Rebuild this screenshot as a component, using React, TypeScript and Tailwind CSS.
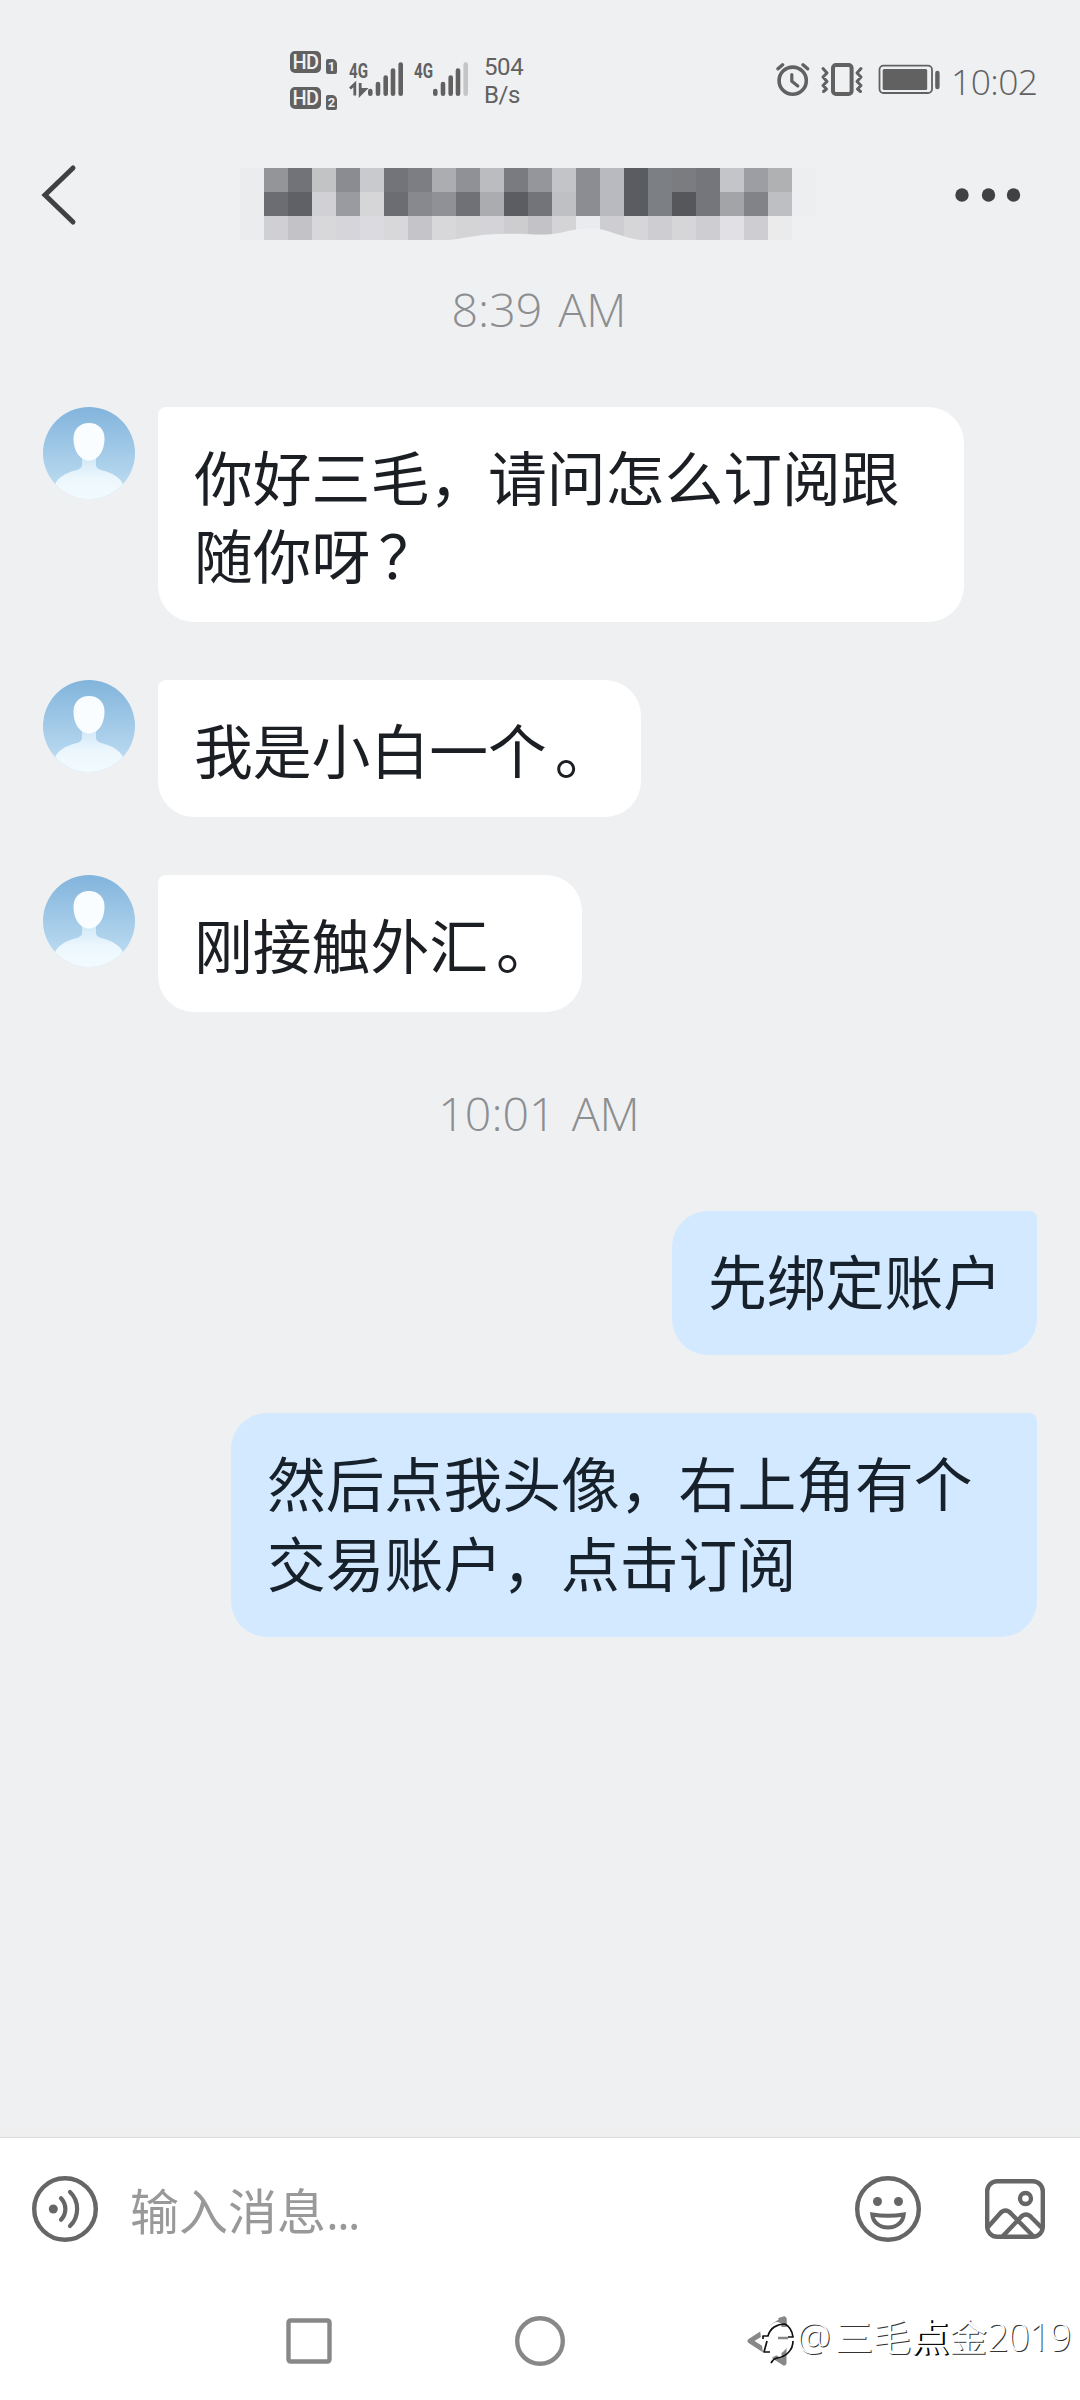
import type { ReactNode } from "react";

const mosaic = [
  ["#949599", "#727378", "#c2c3c5", "#8b8c91", "#c9cacd", "#727479", "#7c7e83", "#acadb0", "#8f9196", "#bbbcc0", "#7a7b80", "#94969b", "#c3c4c7", "#8b8d93", "#b9babf", "#5a5c61", "#7c7f84", "#7a7c80", "#74767b", "#c4c5c8", "#9c9ea4", "#b0b1b3"],
  ["#6b6d72", "#5f6166", "#d0d0d5", "#9a9ba1", "#d6d6d8", "#6b6d72", "#88898e", "#8f9196", "#6f7176", "#abacb0", "#5c5d62", "#727479", "#bfc0c3", "#8b8d93", "#b9babf", "#5a5c61", "#7c7f84", "#55575b", "#74767b", "#a3a4a8", "#818388", "#bebfc2"],
  ["#cfcfd4", "#c2c2c7", "#d8d8da", "#d6d6da", "#dadae0", "#d8d8da", "#c4c4c9", "#d8d8da", "#d4d4d6", "#d4d4d8", "#cdcdcf", "#c3c3c7", "#d4d4d6", "#eaebee", "#cdcdd2", "#d6d6d8", "#cdcdd2", "#d6d6d8", "#cdcdd2", "#e0e0e5", "#cdcdd2", "#ebebec"],
];

const HdBadge = ({ sim }: { sim: string }) => (
  <div className="flex h-[22px] items-end gap-[5px]">
    <span className="flex h-[22px] w-[31px] items-center justify-center rounded-[5px] bg-[#616161] font-['Roboto',sans-serif] text-[20px] leading-[22px] font-medium tracking-[-0.5px] text-[#eff0f2]">
      HD
    </span>
    <span className="mb-[-1px] flex h-[15px] w-[11px] items-center justify-center rounded-[2px] rounded-tr-[5px] bg-[#616161] font-['Roboto',sans-serif] text-[13px] leading-[15px] font-bold text-[#eff0f2]">
      {sim}
    </span>
  </div>
);

const Signal = ({ data, last }: { data?: boolean; last: string }) => (
  <svg width="56" height="44" viewBox="0 -6 56 44" fill="none">
    <text x="0" y="17.500" fill="#616161" fontFamily="Roboto" fontWeight="700" fontSize="20" textLength="19" lengthAdjust="spacingAndGlyphs">
      4G
    </text>
    {data && <path d="M1 28.500 5.800 24v11.500M11.200 23v12M11.200 34.500l5-5h-5z" stroke="#616161" strokeWidth="2.800" />}
    <g stroke="#616161" strokeWidth="4.600" strokeLinecap="round">
      <path d="M21.300 31v2.700M29 24v9.700M36.700 17.500v16.200M44 10.500v23.200" />
      <path d="M51.700 4.500v29.200" stroke={last} />
    </g>
  </svg>
);

const StatusBar = () => (
  <div className="flex h-32 items-start pr-[43px] pl-[290px] text-[#616161]">
    <div className="mt-[51px] flex flex-col gap-[14px]">
      <HdBadge sim="1" />
      <HdBadge sim="2" />
    </div>
    <div className="mt-[54px] ml-[12px] flex gap-[9px]">
      <Signal data last="#616161" />
      <Signal last="#c4c5c6" />
    </div>
    <div className="mt-[53px] ml-[14px] font-['Roboto',sans-serif] text-[24px] leading-[28px] tracking-[-0.4px]">
      <div>504</div>
      <div>B/s</div>
    </div>
    <svg className="mt-[60px] ml-auto" width="164" height="40" viewBox="776 60 164 40" fill="none" stroke="#616161" strokeLinecap="round" strokeLinejoin="round">
      {/* alarm */}
      <circle cx="792.700" cy="80.700" r="13.600" strokeWidth="3.600" />
      <path d="M791.800 74.500v6.800l6 4.800" strokeWidth="3.200" />
      <path d="m778 68.800 4.600-4M807.600 68.800l-4.600-4" strokeWidth="3.400" />
      {/* vibrate */}
      <rect x="833" y="65" width="18.600" height="29" rx="3" strokeWidth="4" />
      <path d="m823 68.500 4 4.500-4 4 4 4.500-4 4 3.500 3.500-3 2.500M861 68.500l-4 4.500 4 4-4 4.500 4 4-3.500 3.500 3 2.500" strokeWidth="3" />
      {/* battery */}
      <rect x="879.500" y="65.700" width="52.500" height="27.300" rx="4" strokeWidth="1.800" />
      <rect x="882.700" y="69" width="44.500" height="21" rx="1.500" fill="#616161" stroke="none" />
      <path d="M937.400 73v14" strokeWidth="4.400" />
    </svg>
    <span className="mt-[56px] ml-[11px] w-[86px] font-['Open_Sans',sans-serif] text-[35.500px] leading-[50px] font-light tracking-[-0.6px]">
      10:02
    </span>
  </div>
);

const Header = () => (
  <header className="flex h-[134px] items-center">
    <svg className="ml-[40px]" width="40" height="64" viewBox="0 0 40 64" fill="none">
      <path d="M33 5 5 32l28 27" stroke="#404142" strokeWidth="5" strokeLinecap="round" strokeLinejoin="miter" />
    </svg>
    <svg className="mt-[18px] ml-[160px]" width="576" height="76" viewBox="-24 -2 576 76" shapeRendering="crispEdges">
      <path d="M-24 0H0v72h-24z" fill="#ebecee" />
      {mosaic.map((row, y) =>
        row.map((color, x) => <rect key={`${x}-${y}`} x={x * 24} y={y * 24} width="24" height="24" fill={color} />)
      )}
      <path d="M528 0h24v48h-24z" fill="#edeef0" />
      <path d="M178 73C205 70 212 66 238 66c26-1 43 3 62-2 12-3 27-5 40-2 14 4 25 9 42 11z" fill="#eff0f2" shapeRendering="auto" />
    </svg>
    <svg className="ml-[139px]" width="68" height="20" viewBox="0 0 68 20" fill="#404142">
      <circle cx="7" cy="10" r="6.700" />
      <circle cx="33.500" cy="10" r="6.700" />
      <circle cx="58.500" cy="10" r="6.700" />
    </svg>
  </header>
);

const Avatar = () => (
  <svg className="shrink-0" width="92" height="92" viewBox="0 0 92 92">
    <defs>
      <linearGradient id="sky" x1="0" y1="0" x2="0" y2="1">
        <stop offset="0" stopColor="#82b4dc" />
        <stop offset="1" stopColor="#c4e1f4" />
      </linearGradient>
      <linearGradient id="body" x1="0" y1="0" x2="0" y2="1">
        <stop offset="0" stopColor="#cfe7f7" />
        <stop offset="0.500" stopColor="#ecf7fd" />
        <stop offset="1" stopColor="#f2fbff" />
      </linearGradient>
      <clipPath id="round">
        <circle cx="46" cy="46" r="46" />
      </clipPath>
    </defs>
    <g clipPath="url(#round)">
      <path d="M0 0h92v92H0z" fill="url(#sky)" />
      <path d="M39 50h14v8c0 3 3 4.500 7 5.500 9 2.500 17 6.500 20 14V92H12V77.500c3-7.500 11-11.500 20-14 4-1 7-2.500 7-5.500z" fill="url(#body)" />
      <path d="M46 16c9 0 15.500 6 15.500 15.500C61.500 44 55 53.500 46 53.500S30.500 44 30.500 31.500C30.500 22 37 16 46 16z" fill="#fafdff" />
    </g>
  </svg>
);

const Time = ({ children }: { children: ReactNode }) => (
  <div className="pr-[2px] text-center font-['Open_Sans',sans-serif] text-[46.500px] leading-[58px] font-light [word-spacing:4px] text-[#8c8e90]">
    {children}
  </div>
);

// closing mark, set a little looser than the font's own side bearing
const Mark = ({ children }: { children: ReactNode }) => <span className="ml-[8px]">{children}</span>;

const Received = ({ children }: { children: ReactNode }) => (
  <div className="flex items-start gap-[23px]">
    <Avatar />
    <p className="max-w-[806px] rounded-[36px] rounded-tl-[8px] bg-white pt-[30px] pr-[27px] pb-[29px] pl-[36px] leading-[78px]">
      {children}
    </p>
  </div>
);

const Sent = ({ children }: { children: ReactNode }) => (
  <p className="max-w-[806px] self-end rounded-[36px] rounded-tr-[8px] bg-[#d2e9ff] pt-[29px] pr-[35px] pb-[35px] pl-[36px] leading-[80px]">
    {children}
  </p>
);

const InputBar = () => (
  <div className="flex h-[143px] items-center border-t border-[#dcdcdc] pl-[32px]">
    <svg width="66" height="66" viewBox="0 0 66 66" fill="none" stroke="#666" strokeLinecap="round">
      <circle cx="33" cy="33" r="30.800" strokeWidth="4.400" />
      <circle cx="21.300" cy="33" r="4.500" fill="#666" stroke="none" />
      <path d="M29 22.200c5.800 6 5.800 15.600 0 21.600M38 16c9.500 9 9.500 25 0 34" strokeWidth="4.200" />
    </svg>
    <span className="ml-[32px] pt-[2px] text-[49px] leading-[60px] text-[#999]">
      输入消息<span className="font-['Open_Sans',sans-serif] tracking-[-2px]">...</span>
    </span>
    <svg className="mr-[64px] ml-auto" width="66" height="66" viewBox="0 0 66 66" fill="none" stroke="#666">
      <circle cx="33" cy="33" r="30.800" strokeWidth="4.400" />
      <circle cx="22.500" cy="25.500" r="4.500" fill="#666" stroke="none" />
      <circle cx="43.500" cy="25.500" r="4.500" fill="#666" stroke="none" />
      <path d="M17.300 38.500c10 1.700 21.400 1.700 31.400 0C48 46 42 51.500 33 51.500S18 46 17.300 38.500z" strokeWidth="4" />
    </svg>
    <svg className="mr-[35px]" width="60" height="60" viewBox="0 0 60 60" fill="none" stroke="#666" strokeWidth="4.400">
      <rect x="2.200" y="2.200" width="55.600" height="55.600" rx="10" />
      <circle cx="40.500" cy="19.500" r="5.500" />
      <path d="M3 48 15 34.500c3.500-4 7.500-4 11 0L49 58M17 58l18.500-19.500c3.500-4 7.500-4 11 0L57 49" />
    </svg>
  </div>
);

const NavBar = () => (
  <div className="relative flex h-[120px] items-center pt-[2px] pl-[286px]">
    <svg width="46" height="46" viewBox="0 0 46 46" fill="none">
      <rect x="2.500" y="2.500" width="41" height="41" rx="2" stroke="#888" strokeWidth="4.400" />
    </svg>
    <svg className="ml-[183px]" width="50" height="50" viewBox="0 0 50 50" fill="none">
      <circle cx="25" cy="25" r="22.800" stroke="#888" strokeWidth="4.400" />
    </svg>
    <svg className="ml-[180px]" width="52" height="52" viewBox="0 0 52 52" fill="none" strokeLinejoin="round">
      <path d="M39 4 5 26l34 22z" stroke="#888" strokeWidth="5" />
      {/* watermark logo over the back key */}
      <path d="M15 15 31 7c8 0 13 6 14 14 0 11-6 17-15 20l-5 3-7-6z" fill="#fff" />
      <path d="M34 5.500 39 4v8" stroke="#888" strokeWidth="5" />
      <path d="M18 24v-3h5C25 13 32 9 40 9c4 2 7 6 8 13h-5M22 26l-3 11h6M48 26c0 9-7 16-16 17-4 1-5 3-6 5" stroke="#111" strokeWidth="1.700" />
      <path d="M33 23h10" stroke="#888" strokeWidth="2.500" />
    </svg>
    <span className="absolute top-[25px] left-[797px] text-[38px] leading-[60px] whitespace-nowrap text-white [text-shadow:1px_1px_0_#333]">
      <span className="inline-block w-[38px] font-['Open_Sans',sans-serif] font-light">@</span>三毛
      <span className="[text-shadow:1px_1px_0_#000,2px_1px_0_#000]">点</span>金
      <span className="font-['Open_Sans',sans-serif] font-light tracking-[-0.8px]">2019</span>
    </span>
  </div>
);

export default function App() {
  return (
    <div className="flex h-[2400px] w-[1080px] flex-col overflow-hidden bg-[#eff0f2] font-['Noto_Sans_CJK_SC',sans-serif] text-[#1b1e23]">
      <StatusBar />
      <Header />
      <main className="flex flex-1 flex-col pt-[18px] pr-[43px] pl-[43px] text-[58.800px]">
        <Time>8:39 AM</Time>
        <div className="mt-[69px] flex flex-col gap-[58px]">
          <Received>
            你好三毛，请问怎么订阅跟随你呀<Mark>？</Mark>
          </Received>
          <Received>
            我是小白一个<Mark>。</Mark>
          </Received>
          <Received>
            刚接触外汇<Mark>。</Mark>
          </Received>
        </div>
        <div className="mt-[72px]">
          <Time>10:01 AM</Time>
        </div>
        <div className="mt-[69px] flex flex-col gap-[58px] text-[#17212b]">
          <Sent>先绑定账户</Sent>
          <Sent>然后点我头像，右上角有个交易账户，点击订阅</Sent>
        </div>
      </main>
      <div className="h-3 bg-gradient-to-b from-[#eff0f2] to-[#efefef]" />
      <footer className="bg-white">
        <InputBar />
        <NavBar />
      </footer>
    </div>
  );
}
